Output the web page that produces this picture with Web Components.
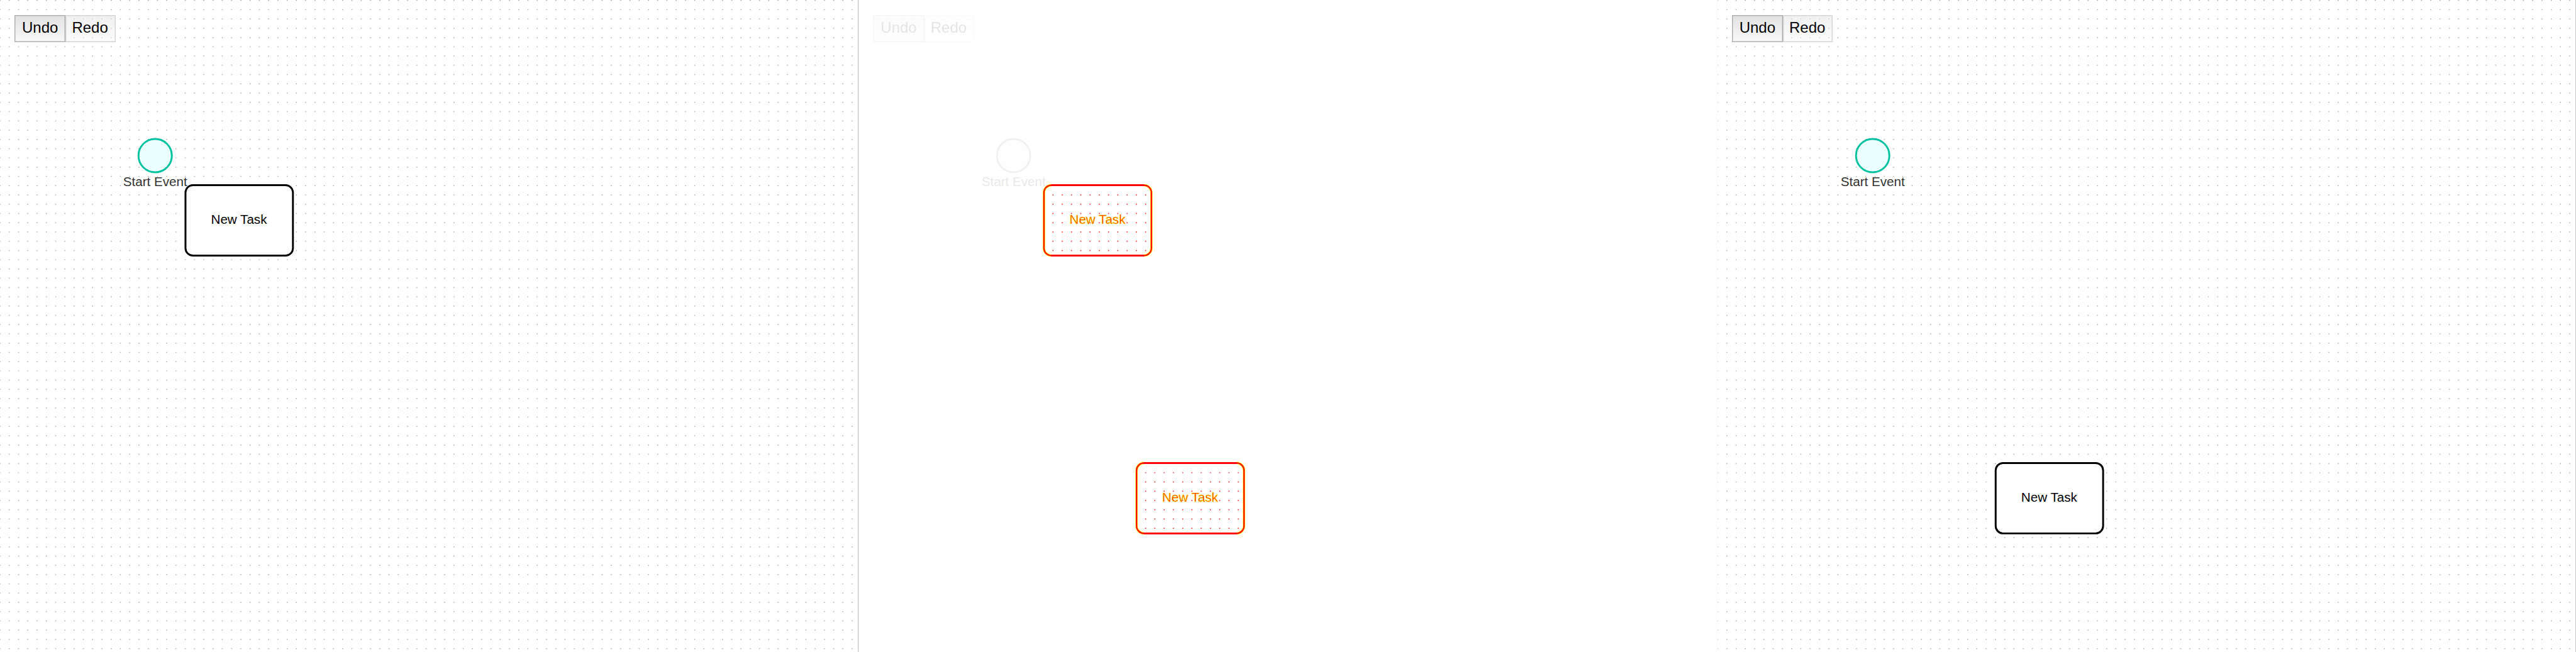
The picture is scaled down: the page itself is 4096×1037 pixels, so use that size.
<!DOCTYPE html>
<html lang="en">
<head>
<meta charset="utf-8">
<title>Undo / redo comparison</title>
<style>
  html, body { margin: 0; background: #fff; }
  body { font-family: "Liberation Sans", Arial, Helvetica, sans-serif; overflow: hidden; }
</style>
</head>
<body>
<compare-board>
  <modeler-pane>
    <command-bar slot="tools"><command-button>Undo</command-button><command-button muted>Redo</command-button></command-bar>
    <modeler-canvas tasks="400,400"></modeler-canvas>
  </modeler-pane>
  <modeler-pane faded>
    <command-bar slot="tools"><command-button>Undo</command-button><command-button muted>Redo</command-button></command-bar>
    <modeler-canvas mode="diff" tasks="400,400 600,1000"></modeler-canvas>
  </modeler-pane>
  <modeler-pane>
    <command-bar slot="tools"><command-button>Undo</command-button><command-button muted>Redo</command-button></command-bar>
    <modeler-canvas tasks="600,1000"></modeler-canvas>
  </modeler-pane>
</compare-board>

<script>
class ShadowElement extends HTMLElement {
  constructor() { super(); this.attachShadow({ mode: "open" }); }
  connectedCallback() { this.shadowRoot.innerHTML = this.render(); }
}

customElements.define("compare-board", class extends ShadowElement {
  render() {
    return `<style>
      :host { display: grid; grid-template-columns: repeat(3, minmax(0, 1fr)); }
    </style><slot></slot>`;
  }
});

customElements.define("modeler-pane", class extends ShadowElement {
  render() {
    return `<style>
      :host { display: grid; }
      slot { display: block; grid-area: 1 / 1; }
      slot[name] { z-index: 1; padding: 24px 23px; justify-self: start; align-self: start; }
      :host([faded]) slot[name] { filter: grayscale(1); opacity: .1; }
    </style><slot></slot><slot name="tools"></slot>`;
  }
});

customElements.define("command-bar", class extends ShadowElement {
  render() {
    return `<style>:host { display: flex; }</style><slot></slot>`;
  }
});

customElements.define("command-button", class extends ShadowElement {
  render() {
    return `<style>
      :host { display: block; }
      button {
        display: block; box-sizing: border-box; height: 43px; margin: 0; padding: 0 11px 4px;
        border: 1px solid #acacac; border-radius: 0; box-shadow: inset 0 0 0 1px #acacac66;
        background: linear-gradient(#e2e2e2, #f8f8f8); color: #000;
        font: 24px/28px "Liberation Sans", Arial, sans-serif;
      }
      :host([muted]) button {
        padding-left: 9px; border-color: #acacac80; box-shadow: inset 0 0 0 1px #acacac33;
        background: linear-gradient(#e2e2e280, #f8f8f880); background-clip: padding-box;
      }
    </style><button type="button"><slot></slot></button>`;
  }
});

customElements.define("modeler-canvas", class extends ShadowElement {
  dots(x0, y0, x1, y1) {
    let d = "";
    for (let y = y0; y < y1; y += 20)
      for (let x = x0; x < x1; x += 20) d += `M${x - (x ? 1 : 0)} ${y}h${x ? 2 : 1}v2h-${x ? 2 : 1}z`;
    return d;
  }
  task(x, y) {
    return `<g transform="translate(${x} ${y})">
      <rect class="task" x="0.5" width="232" height="152" rx="16"/>
      <text x="116" y="84">New Task</text></g>`;
  }
  changedTask(x, y) {
    return `<g transform="translate(${x} ${y})">
      <rect x="-2" y="-2" width="237" height="156" rx="18" fill="#fff"/>
      <path class="dot-hot" d="${this.dots(20, 20, 221, 141)}"/>
      <path class="halo" d="M16.5 0A16 16 0 0 0 .5 16V136A16 16 0 0 0 16.5 152M216.5 0A16 16 0 0 1 232.5 16V136A16 16 0 0 1 216.5 152"/>
      <rect class="core" x="0.5" width="232" height="152" rx="16"/>
      <path class="edge" d="M16 0H217M16 152H217"/>
      <text class="hot" x="116" y="84">New Task</text></g>`;
  }
  render() {
    const diff = this.getAttribute("mode") === "diff";
    const tasks = this.getAttribute("tasks").split(" ").map(p => p.split(",").map(Number));
    return `<style>
      :host { display: block; --dot: #a9a9a9; --ring: #00c1a0; --fill: #ecffff; --label: #333; }
      :host([mode="diff"]) { --dot: #f6f6f6; --ring: #f1f1f1; --fill: #fefefe; --label: #e9e9e9; }
      svg { display: block; width: 100%; height: auto; overflow: visible; }
      text { font: 28px "Liberation Sans", Arial, sans-serif; text-anchor: middle; fill: #000; }
      .dots { fill: var(--dot); }
      .start { fill: var(--fill); stroke: var(--ring); stroke-width: 4; }
      .label { fill: var(--label); }
      .task { fill: #fff; stroke: #000; stroke-width: 4; }
      .dot-hot { fill: #f00; }
      .halo { fill: none; stroke: #ff0; stroke-width: 5; }
      .core { fill: none; stroke: #f00; stroke-width: 3; }
      .edge { fill: none; stroke: #f00; stroke-width: 4; }
      .hot { fill: #f00; stroke: #ff0; stroke-width: 0.8; }
    </style>
    <svg viewBox="0 0 1854 1408">
      <path class="dots" d="${this.dots(0, 0, 1854, 1408)}"/>
      <rect class="dots" x="1852.6" width="1.2" height="1408"/>
      <circle class="start" cx="335" cy="336" r="36"/>
      <text class="label" x="335" y="402">Start Event</text>
      ${tasks.map(([x, y]) => diff ? this.changedTask(x, y) : this.task(x, y)).join("")}
    </svg>`;
  }
});
</script>
</body>
</html>
